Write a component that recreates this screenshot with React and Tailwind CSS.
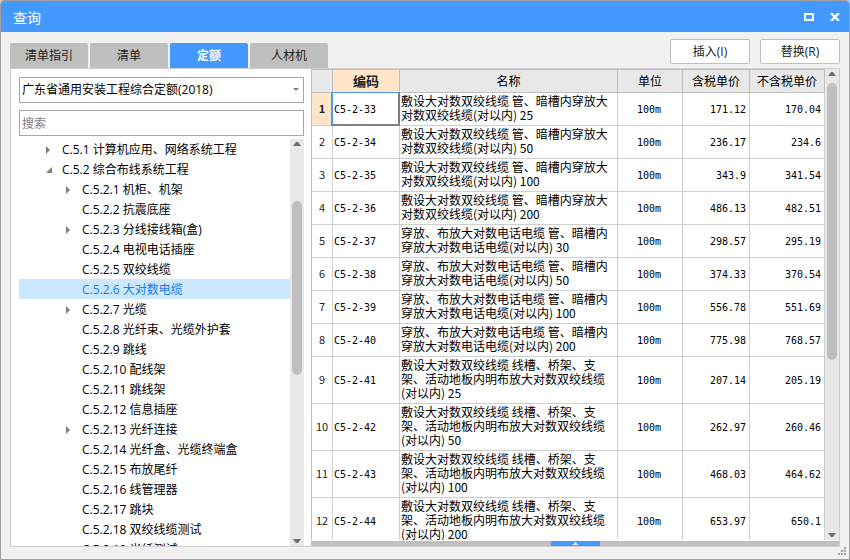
import { useState } from "react";

const tabs = ["清单指引", "清单", "定额", "人材机"];

const tree = [
  { code: "C.5.1", name: "计算机应用、网络系统工程", level: 1, arrow: "closed" },
  { code: "C.5.2", name: "综合布线系统工程", level: 1, arrow: "open" },
  { code: "C.5.2.1", name: "机柜、机架", level: 2, arrow: "closed" },
  { code: "C.5.2.2", name: "抗震底座", level: 2 },
  { code: "C.5.2.3", name: "分线接线箱(盒)", level: 2, arrow: "closed" },
  { code: "C.5.2.4", name: "电视电话插座", level: 2 },
  { code: "C.5.2.5", name: "双绞线缆", level: 2 },
  { code: "C.5.2.6", name: "大对数电缆", level: 2 },
  { code: "C.5.2.7", name: "光缆", level: 2, arrow: "closed" },
  { code: "C.5.2.8", name: "光纤束、光缆外护套", level: 2 },
  { code: "C.5.2.9", name: "跳线", level: 2 },
  { code: "C.5.2.10", name: "配线架", level: 2 },
  { code: "C.5.2.11", name: "跳线架", level: 2 },
  { code: "C.5.2.12", name: "信息插座", level: 2 },
  { code: "C.5.2.13", name: "光纤连接", level: 2, arrow: "closed" },
  { code: "C.5.2.14", name: "光纤盒、光缆终端盒", level: 2 },
  { code: "C.5.2.15", name: "布放尾纤", level: 2 },
  { code: "C.5.2.16", name: "线管理器", level: 2 },
  { code: "C.5.2.17", name: "跳块", level: 2 },
  { code: "C.5.2.18", name: "双绞线缆测试", level: 2 },
  { code: "C.5.2.19", name: "光纤测试", level: 2 },
];

const PIPE = "敷设大对数双绞线缆 管、暗槽内穿放大对数双绞线缆(对以内)";
const PHONE = "穿放、布放大对数电话电缆 管、暗槽内穿放大对数电话电缆(对以内)";
const TRAY = "敷设大对数双绞线缆 线槽、桥架、支架、活动地板内明布放大对数双绞线缆(对以内)";

const rows = [
  { code: "C5-2-33", name: `${PIPE} 25`, unit: "100m", taxed: "171.12", untaxed: "170.04" },
  { code: "C5-2-34", name: `${PIPE} 50`, unit: "100m", taxed: "236.17", untaxed: "234.6" },
  { code: "C5-2-35", name: `${PIPE} 100`, unit: "100m", taxed: "343.9", untaxed: "341.54" },
  { code: "C5-2-36", name: `${PIPE} 200`, unit: "100m", taxed: "486.13", untaxed: "482.51" },
  { code: "C5-2-37", name: `${PHONE} 30`, unit: "100m", taxed: "298.57", untaxed: "295.19" },
  { code: "C5-2-38", name: `${PHONE} 50`, unit: "100m", taxed: "374.33", untaxed: "370.54" },
  { code: "C5-2-39", name: `${PHONE} 100`, unit: "100m", taxed: "556.78", untaxed: "551.69" },
  { code: "C5-2-40", name: `${PHONE} 200`, unit: "100m", taxed: "775.98", untaxed: "768.57" },
  { code: "C5-2-41", name: `${TRAY} 25`, unit: "100m", taxed: "207.14", untaxed: "205.19" },
  { code: "C5-2-42", name: `${TRAY} 50`, unit: "100m", taxed: "262.97", untaxed: "260.46" },
  { code: "C5-2-43", name: `${TRAY} 100`, unit: "100m", taxed: "468.03", untaxed: "464.62" },
  { code: "C5-2-44", name: `${TRAY} 200`, unit: "100m", taxed: "653.97", untaxed: "650.1" },
];

function TreeArrow({ state }) {
  return (
    <span className="flex w-[18px] shrink-0 items-center pl-px">
      {state === "closed" && (
        <svg width="8" height="8" viewBox="0 0 8 8" fill="#7d7d7d" className="block">
          <path d="M1 0v8l4-4z" />
        </svg>
      )}
      {state === "open" && (
        <svg width="8" height="8" viewBox="0 0 8 8" fill="#7d7d7d" className="block">
          <path d="M7 1v6H1z" />
        </svg>
      )}
    </span>
  );
}

function ScrollBar({ thumb }) {
  return (
    <div className="flex w-[14px] shrink-0 flex-col items-center bg-[#e8e8e8]">
      <svg width="8" height="4" viewBox="0 0 8 4" fill="#6e6e78" className="mt-[3px] shrink-0">
        <path d="M0 4l3-4h2l3 4z" />
      </svg>
      <div className="min-h-0 w-[10px] flex-1 py-[7px]">
        <div className={`w-full rounded-full bg-[#bfbfbf] ${thumb}`} />
      </div>
      <svg width="8" height="4" viewBox="0 0 8 4" fill="#6e6e78" className="mb-[3px] shrink-0">
        <path d="M0 0l3 4h2l3-4z" />
      </svg>
    </div>
  );
}

export default function App() {
  const [tab, setTab] = useState("定额");
  const [node, setNode] = useState("C.5.2.6");
  const [current, setCurrent] = useState(0);
  const [keyword, setKeyword] = useState("");

  return (
    <div className="bg-[#d4d4d4] font-['Open_Sans','Noto_Sans_CJK_SC',sans-serif] text-[12px] text-black">
      <div className="relative flex h-screen flex-col overflow-hidden rounded-t-[4px] border border-[#a0a0a0] bg-[#f1f1f1]">
        <header className="flex h-[31px] shrink-0 items-center bg-[#4499ff] pr-[9px] pl-3 text-white">
          <h1 className="pt-[3px] text-[14px] leading-5">查询</h1>
          <div className="ml-auto flex items-center gap-4">
            <button aria-label="最大化">
              <svg width="10" height="8" viewBox="0 0 10 8" className="block">
                <path d="M1 1h8v6H1z" fill="none" stroke="#fff" strokeWidth="2" />
              </svg>
            </button>
            <button aria-label="关闭">
              <svg width="10" height="8" viewBox="0 0 10 8" className="block">
                <path d="M1 0l8 8M9 0L1 8" stroke="#fff" strokeWidth="2.4" />
              </svg>
            </button>
          </div>
        </header>

        <div className="flex shrink-0 items-end justify-between px-[9px] pt-[7px]">
          <div className="flex gap-[2px]" role="tablist">
            {tabs.map((t) => (
              <button
                key={t}
                role="tab"
                aria-selected={t === tab}
                onClick={() => setTab(t)}
                className={`h-[25px] w-[78px] rounded-t-[2px] ${
                  t === tab ? "bg-[#4499ff] font-bold text-white" : "bg-[#bfbfbf] text-[#222]"
                }`}
              >
                {t}
              </button>
            ))}
          </div>
          <div className="flex gap-[10px] pb-1">
            <button className="h-[25px] w-[80px] rounded-[2px] border border-[#bfbfbf] bg-white text-[#222]">
              插入(I)
            </button>
            <button className="h-[25px] w-[80px] rounded-[2px] border border-[#bfbfbf] bg-white text-[#222]">
              替换(R)
            </button>
          </div>
        </div>

        <main className="mx-[9px] mb-3 flex min-h-0 flex-1 border border-[#cfcfcf] bg-white">
          <aside className="flex w-[300px] shrink-0 flex-col pt-2 pr-[7px] pl-2">
            <div className="relative shrink-0">
              <select
                aria-label="定额库"
                className="block h-[26px] w-full appearance-none border border-[#a6a6a6] bg-white px-[2px] outline-none"
              >
                <option>广东省通用安装工程综合定额(2018)</option>
              </select>
              <svg
                width="6"
                height="3"
                viewBox="0 0 6 3"
                fill="#7d7d7d"
                className="pointer-events-none absolute top-[11px] right-[5px]"
              >
                <path d="M0 0h6L3 3z" />
              </svg>
            </div>
            <input
              type="text"
              aria-label="搜索"
              placeholder="搜索"
              value={keyword}
              onChange={(e) => setKeyword(e.target.value)}
              className="mt-[7px] block h-[26px] w-full shrink-0 border border-[#a6a6a6] px-[2px] outline-none placeholder:text-[#808080]"
            />
            <div className="mt-[3px] flex min-h-0 flex-1">
              <ul className="min-w-0 flex-1 overflow-hidden">
                {tree.map((n) => (
                  <li key={n.code}>
                    <button
                      onClick={() => setNode(n.code)}
                      className={`flex h-5 w-full items-center pt-[2px] text-left whitespace-nowrap ${
                        n.level === 1 ? "pl-[25px]" : "pl-[45px]"
                      } ${n.code === node ? "bg-[#cce8ff] text-[#1a7ae8]" : ""}`}
                    >
                      <TreeArrow state={n.arrow} />
                      {n.code} {n.name}
                    </button>
                  </li>
                ))}
              </ul>
              <ScrollBar thumb="mt-12 h-[174px]" />
            </div>
          </aside>

          <section className="flex min-w-0 flex-1 flex-col">
            <div className="flex min-h-0 flex-1">
              <div className="min-w-0 flex-1 overflow-hidden border-l border-[#bfbfbf] font-['Noto_Sans_CJK_SC',sans-serif]">
                <table className="w-full table-fixed border-separate border-spacing-0">
                  <colgroup>
                    <col className="w-[21px]" />
                    <col className="w-[67px]" />
                    <col />
                    <col className="w-[65px]" />
                    <col className="w-[67px]" />
                    <col className="w-[75px]" />
                  </colgroup>
                  <thead>
                    <tr className="h-6 bg-[#e8e8e8] *:border-t *:border-r *:border-b *:border-[#bfbfbf] *:p-0 *:font-normal">
                      <th aria-label="序号" />
                      <th className="bg-[#ffe6c8]">
                        <span className="text-[13px] font-bold text-[#222]">编码</span>
                      </th>
                      <th>名称</th>
                      <th>单位</th>
                      <th>含税单价</th>
                      <th>不含税单价</th>
                    </tr>
                  </thead>
                  <tbody className="leading-[14px]">
                    {rows.map((r, i) => (
                      <tr
                        key={r.code}
                        onClick={() => setCurrent(i)}
                        className="*:border-r *:border-b *:border-[#cfcfcf]"
                      >
                        <th
                          className={`pt-px pb-[3px] text-center text-[11px] text-[#222] ${
                            i === current ? "bg-[#ffe6c8] font-bold" : "font-normal"
                          }`}
                        >
                          {i + 1}
                        </th>
                        <td className="relative pt-[3px] pb-px pl-px font-['DejaVu_Sans_Mono',monospace] text-[10px]">
                          {r.code}
                          {i === current && (
                            <span className="absolute -top-px -right-px -bottom-px -left-[2px] border-2 border-t border-[#808080] border-t-[#4499ff] border-l-[#4499ff]" />
                          )}
                        </td>
                        <td className="pt-px pb-[3px] pl-px">{r.name}</td>
                        <td className="pt-[3px] pr-[2px] pb-px text-center font-['DejaVu_Sans_Mono',monospace] text-[10px]">
                          {r.unit}
                        </td>
                        <td className="pt-[3px] pr-[3px] pb-px text-right font-['DejaVu_Sans_Mono',monospace] text-[10px]">
                          {r.taxed}
                        </td>
                        <td className="pt-[3px] pr-[3px] pb-px text-right font-['DejaVu_Sans_Mono',monospace] text-[10px]">
                          {r.untaxed}
                        </td>
                      </tr>
                    ))}
                  </tbody>
                </table>
              </div>
              <ScrollBar thumb="h-[277px]" />
            </div>
            <div className="mt-px flex h-[5px] shrink-0 justify-center bg-[#bfbfbf]">
              <button aria-label="展开" className="flex w-[49px] items-center justify-center bg-[#4499ff]">
                <svg width="5" height="3" viewBox="0 0 5 3" fill="#fff">
                  <path d="M0 3V2h1V1h1V0h1v1h1v1h1v1z" />
                </svg>
              </button>
            </div>
          </section>
        </main>

        <svg
          width="8"
          height="8"
          viewBox="0 0 8 8"
          fill="#a6a6a6"
          className="pointer-events-none absolute right-[3px] bottom-1"
        >
          <path d="M6 0h2v2H6zM3 3h2v2H3zM6 3h2v2H6zM0 6h2v2H0zM3 6h2v2H3zM6 6h2v2H6z" />
        </svg>
      </div>
    </div>
  );
}
